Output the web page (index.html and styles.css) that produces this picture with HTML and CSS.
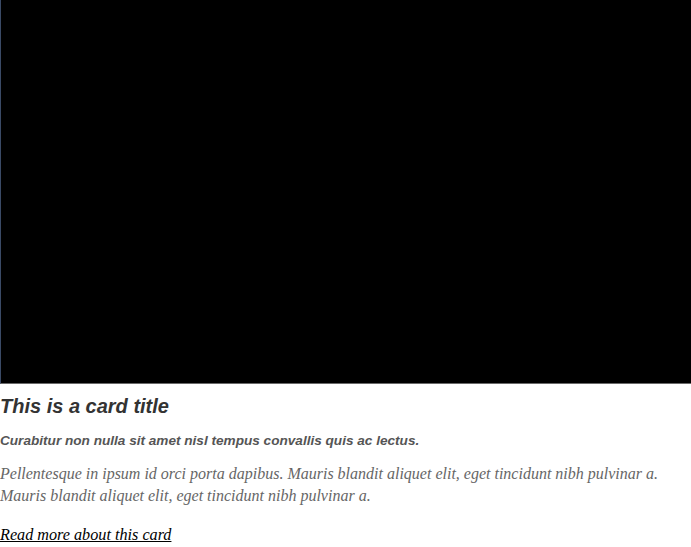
FILE: index.html
```html
<!DOCTYPE html>
<html>
<head>
<meta charset="utf-8">
<link rel="stylesheet" href="styles.css">
</head>
<body>
<div class="card">
  <div class="media"></div>
  <div class="body">
    <h2 class="title">This is a card title</h2>
    <p class="subtitle">Curabitur non nulla sit amet nisl tempus convallis quis ac lectus.</p>
    <p class="text">Pellentesque in ipsum id orci porta dapibus. Mauris blandit aliquet elit, eget tincidunt nibh pulvinar a. Mauris blandit aliquet elit, eget tincidunt nibh pulvinar a.</p>
    <a class="link" href="#">Read more about this card</a>
  </div>
</div>
</body>
</html>
```
FILE: styles.css
```css
html, body { margin: 0; padding: 0; background: #fff; }
.card { width: 691px; }
.media {
  background: #000;
  border-left: 1px solid #3a4a66;
  border-bottom: 1px solid #6a6a6a;
  box-sizing: border-box;
  height: 384px;
}
.body { padding: 0; }
.title {
  margin: 10px 0 0 0;
  font-family: "Liberation Sans", Arial, sans-serif;
  font-style: italic;
  font-weight: bold;
  font-size: 20px;
  line-height: 24px;
  color: #333;
}
.subtitle {
  margin: 13px 0 0 0;
  font-family: "Liberation Sans", Arial, sans-serif;
  font-style: italic;
  font-weight: bold;
  font-size: 13.6px;
  line-height: 20px;
  color: #555;
}
.text {
  margin: 12px 0 0 0;
  font-family: "Liberation Serif", Georgia, serif;
  font-style: italic;
  font-size: 16px;
  line-height: 22px;
  color: #666;
}
.link {
  display: inline-block;
  margin-top: 17px;
  font-family: "Liberation Serif", Georgia, serif;
  font-style: italic;
  font-size: 16.2px;
  line-height: 22px;
  color: #000;
}
```
